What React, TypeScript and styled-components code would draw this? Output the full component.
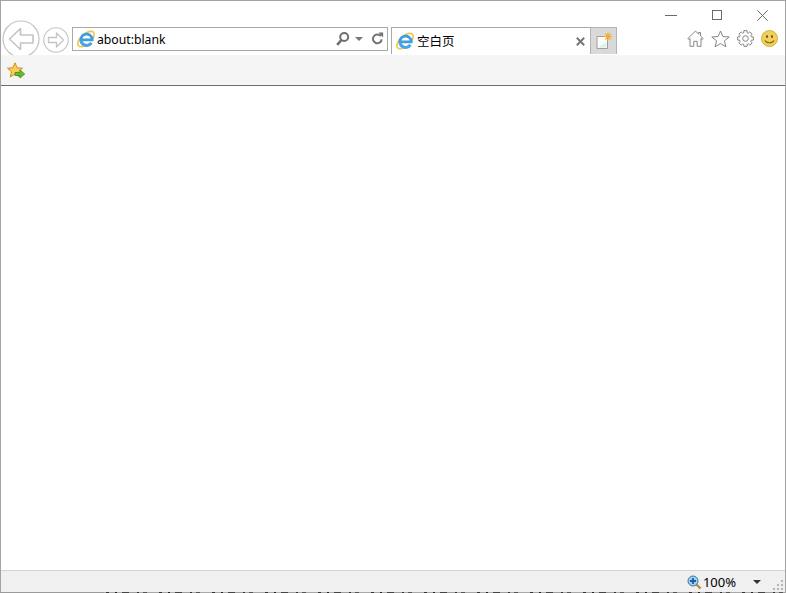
import { FC } from 'react';
import styled, { createGlobalStyle } from 'styled-components';

const GlobalStyle = createGlobalStyle`
  html, body {
    margin: 0;
    padding: 0;
    background: #ffffff;
    overflow: hidden;
  }
`;

const Window = styled.div`
  box-sizing: border-box;
  width: 786px;
  height: 593px;
  display: flex;
  flex-direction: column;
  border: 1px solid #a3a3a3;
  border-bottom: 0;
  font-family: 'Noto Sans', 'Noto Sans CJK SC', sans-serif;
  color: #000;
`;

const Chrome = styled.header`
  height: 54px;
  flex: none;
  display: flex;
  align-items: flex-end;
  overflow: hidden;
  background: #fff;
`;

const NavButton = styled.button<{ $size: number; $gap: number; $drop: number }>`
  flex: none;
  width: ${(p) => p.$size}px;
  height: ${(p) => p.$size}px;
  margin: 0 0 ${(p) => p.$drop}px ${(p) => p.$gap}px;
  padding: 0;
  border: 0;
  background: none;
  display: block;
  svg {
    display: block;
  }
`;

const AddressBar = styled.div`
  box-sizing: border-box;
  flex: none;
  width: 316px;
  height: 24px;
  margin: 0 0 4px 3px;
  display: flex;
  align-items: center;
  padding: 0 3px 0 4px;
  border: 1px solid #a9a9a9;
`;

const AddressText = styled.span`
  flex: 1;
  margin: 1px 0 0 2px;
  font-size: 12.2px;
  line-height: 22px;
`;

const AddressTool = styled.span<{ $gap: number }>`
  display: flex;
  margin-left: ${(p) => p.$gap}px;
`;

const Tab = styled.div`
  box-sizing: border-box;
  flex: none;
  width: 199px;
  height: 27px;
  margin: 0 0 1px 3px;
  display: flex;
  align-items: center;
  padding: 0 5px 0 4px;
  border-top: 1px solid #a9a9a9;
  border-left: 1px solid #a9a9a9;
`;

const TabTitle = styled.span`
  flex: 1;
  margin-left: 3px;
  font-family: 'Noto Sans CJK SC', sans-serif;
  font-size: 12.5px;
  line-height: 20px;
`;

const NewTab = styled.div`
  box-sizing: border-box;
  flex: none;
  width: 27px;
  height: 27px;
  margin-bottom: 1px;
  display: flex;
  align-items: center;
  justify-content: center;
  background: #d9d9d9;
  border: 1px solid #b4b4b4;
  border-bottom: 0;
`;

const RightColumn = styled.div`
  flex: 1;
  height: 54px;
  display: flex;
  flex-direction: column;
  align-items: flex-end;
`;

const WindowControls = styled.div`
  display: flex;
  align-items: center;
  height: 28px;
  padding-right: 17px;
  gap: 35px;
  svg {
    display: block;
  }
`;

const Tools = styled.div`
  display: flex;
  align-items: center;
  gap: 7px;
  height: 19px;
  padding-right: 7px;
  svg {
    display: block;
  }
`;

const FavoritesBar = styled.div`
  height: 28px;
  flex: none;
  display: flex;
  align-items: center;
  padding: 2px 0 0 6px;
  background: #f5f5f5;
  border-bottom: 1px solid #6e6e6e;
`;

const Content = styled.main`
  flex: 1;
  background: #fff;
`;

const StatusBar = styled.footer`
  box-sizing: border-box;
  height: 22px;
  flex: none;
  display: flex;
  align-items: center;
  justify-content: flex-end;
  background: #f0f0f0;
  border-top: 1px solid #d4d4d4;
  padding-top: 1px;
`;

const Zoom = styled.span`
  font-size: 13px;
  line-height: 18px;
  margin-left: 1px;
`;

const ZoomArrow = styled.span`
  width: 0;
  height: 0;
  margin: 0 12px 0 17px;
  border-left: 4.5px solid transparent;
  border-right: 4.5px solid transparent;
  border-top: 4px solid #333;
`;

const Grip = styled.span`
  align-self: flex-end;
  margin: 0 1px 1px 0;
  display: flex;
`;

const BottomEdge = styled.div`
  height: 1px;
  flex: none;
  margin: 0 -1px;
  background:
    linear-gradient(#9a9a9a, #9a9a9a) 0 0 / 104px 1px no-repeat,
    repeating-linear-gradient(
      90deg,
      #333 0 3px,
      #a8a8a8 3px 9px,
      #222 9px 11px,
      #b0b0b0 11px 16px,
      #444 16px 23px,
      #a0a0a0 23px 31px,
      #333 31px 33px,
      #aaa 33px 37px,
      #555 37px 41px,
      #a8a8a8 41px 53px
    );
`;

const IeLogo: FC = () => (
  <svg width="18" height="18" viewBox="0 0 18 18" fill="none">
    <ellipse
      cx="9"
      cy="9"
      rx="10"
      ry="5"
      transform="rotate(-42 9 9)"
      stroke="#f0c548"
      strokeWidth="1.6"
    />
    <circle cx="9.5" cy="9.5" r="6.4" fill="#fff" />
    <path d="M3.8 9.8h11.4a5.7 5.7 0 1 0-1 3.2" stroke="#3f9de0" strokeWidth="2.8" />
    <path d="M4 10.5a5.7 5.7 0 0 0 10.4 2.4" stroke="#4aa6e6" strokeWidth="2.6" />
    <path d="M6.2 7.4h6.4" stroke="#fff" strokeWidth="1.2" />
  </svg>
);

const BackIcon: FC = () => (
  <svg width="38" height="38" viewBox="0 0 38 38" fill="none" stroke="#c4c4c4">
    <circle cx="19" cy="19" r="18" strokeWidth="1.2" />
    <path
      d="M18.5 8.5 7.5 19l11 10.500V23H31v-8H18.500z"
      strokeWidth="1.6"
      strokeLinejoin="round"
    />
  </svg>
);

const ForwardIcon: FC = () => (
  <svg width="26" height="26" viewBox="0 0 26 26" fill="none" stroke="#c4c4c4">
    <circle cx="13" cy="13" r="12.2" strokeWidth="1.1" />
    <path
      d="M13.5 6 20.5 13l-7 7v-4.500H5.500v-5h8z"
      strokeWidth="1.3"
      strokeLinejoin="round"
    />
  </svg>
);

const SearchIcon: FC = () => (
  <svg width="15" height="16" viewBox="0 0 15 16" fill="none" stroke="#6f6f6f">
    <circle cx="9.2" cy="6" r="4" strokeWidth="2" />
    <path d="M6.4 9 2.2 13.8" strokeWidth="2.6" />
  </svg>
);

const DropIcon: FC = () => (
  <svg width="8" height="16" viewBox="0 0 8 16" fill="#777">
    <path d="M0 6h8L4 10z" />
  </svg>
);

const RefreshIcon: FC = () => (
  <svg width="13" height="16" viewBox="0 0 13 16" fill="none">
    <path d="M9.8 5.2a4.4 4.4 0 1 0 .9 3.2" stroke="#707070" strokeWidth="2" />
    <path d="M7.5 1.5h4.600v4.900z" fill="#707070" />
  </svg>
);

const CloseTabIcon: FC = () => (
  <svg width="9" height="9" viewBox="0 0 9 9" stroke="#777" strokeWidth="2">
    <path d="M.8.8l7.4 7.4M8.2.8.8 8.200" />
  </svg>
);

const NewTabIcon: FC = () => (
  <svg width="18" height="18" viewBox="0 0 18 18" fill="none">
    <path d="M2 4.5h9.5l1 1V16.500H2z" fill="#fbfcf6" stroke="#9aa0a0" />
    <path d="M3 15.5h8.5V10z" fill="#dff1e8" />
    <path
      d="M13 .5v8M9 4.5h8M10.2 1.700l5.600 5.600M15.800 1.700l-5.600 5.600"
      stroke="#f5a91f"
      strokeWidth="1.1"
    />
  </svg>
);

const MinimizeIcon: FC = () => (
  <svg width="12" height="11" viewBox="0 0 12 11" stroke="#6a6a6a">
    <path d="M0 5.5h12" />
  </svg>
);

const MaximizeIcon: FC = () => (
  <svg width="10" height="10" viewBox="0 0 10 10" fill="none" stroke="#6a6a6a">
    <rect x=".5" y=".5" width="9" height="9" />
  </svg>
);

const CloseIcon: FC = () => (
  <svg width="11" height="11" viewBox="0 0 11 11" stroke="#6a6a6a">
    <path d="M.3.3l10.4 10.4M10.7.3.3 10.7" />
  </svg>
);

const HomeIcon: FC = () => (
  <svg width="17" height="17" viewBox="0 0 17 17" fill="none" stroke="#858585">
    <path
      d="M8.5 1 .8 8.6l1 1L3 8.5v7.8h3.8v-5h3.4v5H14V8.5l1.2 1.1 1-1L13.5 6V2.5h-1.800v1.700z"
      strokeLinejoin="round"
    />
  </svg>
);

const StarIcon: FC = () => (
  <svg width="19" height="18" viewBox="0 0 19 18" fill="none" stroke="#858585">
    <path
      d="M9.5 1l2.4 5.5 6.3.5-4.800 3.900 1.500 5.900-5.400-3.200-5.400 3.200 1.500-5.900L.8 7l6.300-.5z"
      strokeLinejoin="round"
    />
  </svg>
);

// eight rounded cog teeth around the centre
const gearPath = (): string => {
  const points: string[] = [];
  for (let i = 0; i < 8; i += 1) {
    const a = (i * Math.PI) / 4;
    [
      [-0.3, 6],
      [-0.2, 8],
      [0.2, 8],
      [0.3, 6],
    ].forEach(([offset, r]) => {
      const x = 8.5 + r * Math.cos(a + offset);
      const y = 8.5 + r * Math.sin(a + offset);
      points.push(`${x.toFixed(2)} ${y.toFixed(2)}`);
    });
  }
  return `M${points.join('L')}Z`;
};

const GearIcon: FC = () => (
  <svg width="17" height="17" viewBox="0 0 17 17" fill="none" stroke="#858585">
    <path d={gearPath()} strokeLinejoin="round" />
    <circle cx="8.5" cy="8.5" r="2.8" />
  </svg>
);

const SmileIcon: FC = () => (
  <svg width="17" height="17" viewBox="0 0 17 17">
    <circle cx="8.5" cy="8.5" r="8" fill="#f2cf5b" stroke="#d2ae3e" />
    <ellipse cx="6" cy="6.5" rx="1" ry="1.5" fill="#6b5413" />
    <ellipse cx="11" cy="6.5" rx="1" ry="1.5" fill="#6b5413" />
    <path d="M4 10.5c1.5 3 7.500 3 9 0" fill="none" stroke="#7b6216" strokeWidth="1.1" />
  </svg>
);

const FavoritesIcon: FC = () => (
  <svg width="18" height="18" viewBox="0 0 18 18">
    <path
      d="M8 .8l2.200 5 5.300.4-4 3.500 1.300 5.300L8 12.200 3.200 15l1.300-5.300-4-3.500 5.300-.4z"
      fill="#f9cf58"
      stroke="#d58a22"
      strokeLinejoin="round"
    />
    <path d="M8 10.5h5V8l4.700 4-4.700 4v-2.500H8z" fill="#5fc02f" stroke="#3b8f1c" strokeWidth=".8" />
  </svg>
);

const ZoomIcon: FC = () => (
  <svg width="15" height="15" viewBox="0 0 15 15">
    <path d="M9 9l4.500 4.500" stroke="#b98a4a" strokeWidth="2.4" />
    <circle cx="6" cy="6" r="5" fill="#9fd0ef" stroke="#3c78a8" />
    <path d="M3 6h6M6 3v6" stroke="#1c5f97" strokeWidth="1.8" />
  </svg>
);

const GripIcon: FC = () => (
  <svg width="11" height="11" viewBox="0 0 11 11" fill="#b5b5b5">
    <rect x="8" y="0" width="2" height="2" />
    <rect x="4" y="4" width="2" height="2" />
    <rect x="8" y="4" width="2" height="2" />
    <rect x="0" y="8" width="2" height="2" />
    <rect x="4" y="8" width="2" height="2" />
    <rect x="8" y="8" width="2" height="2" />
  </svg>
);

const App: FC = () => (
  <>
    <GlobalStyle />
    <Window>
      <Chrome>
        <NavButton $size={38} $gap={1} $drop={-3}>
          <BackIcon />
        </NavButton>
        <NavButton $size={26} $gap={3} $drop={2}>
          <ForwardIcon />
        </NavButton>
        <AddressBar>
          <IeLogo />
          <AddressText>about:blank</AddressText>
          <AddressTool $gap={0}>
            <SearchIcon />
          </AddressTool>
          <AddressTool $gap={5}>
            <DropIcon />
          </AddressTool>
          <AddressTool $gap={8}>
            <RefreshIcon />
          </AddressTool>
        </AddressBar>
        <Tab>
          <IeLogo />
          <TabTitle>空白页</TabTitle>
          <CloseTabIcon />
        </Tab>
        <NewTab>
          <NewTabIcon />
        </NewTab>
        <RightColumn>
          <WindowControls>
            <MinimizeIcon />
            <MaximizeIcon />
            <CloseIcon />
          </WindowControls>
          <Tools>
            <HomeIcon />
            <StarIcon />
            <GearIcon />
            <SmileIcon />
          </Tools>
        </RightColumn>
      </Chrome>
      <FavoritesBar>
        <FavoritesIcon />
      </FavoritesBar>
      <Content />
      <StatusBar>
        <ZoomIcon />
        <Zoom>100%</Zoom>
        <ZoomArrow />
        <Grip>
          <GripIcon />
        </Grip>
      </StatusBar>
      <BottomEdge />
    </Window>
  </>
);

export default App;
